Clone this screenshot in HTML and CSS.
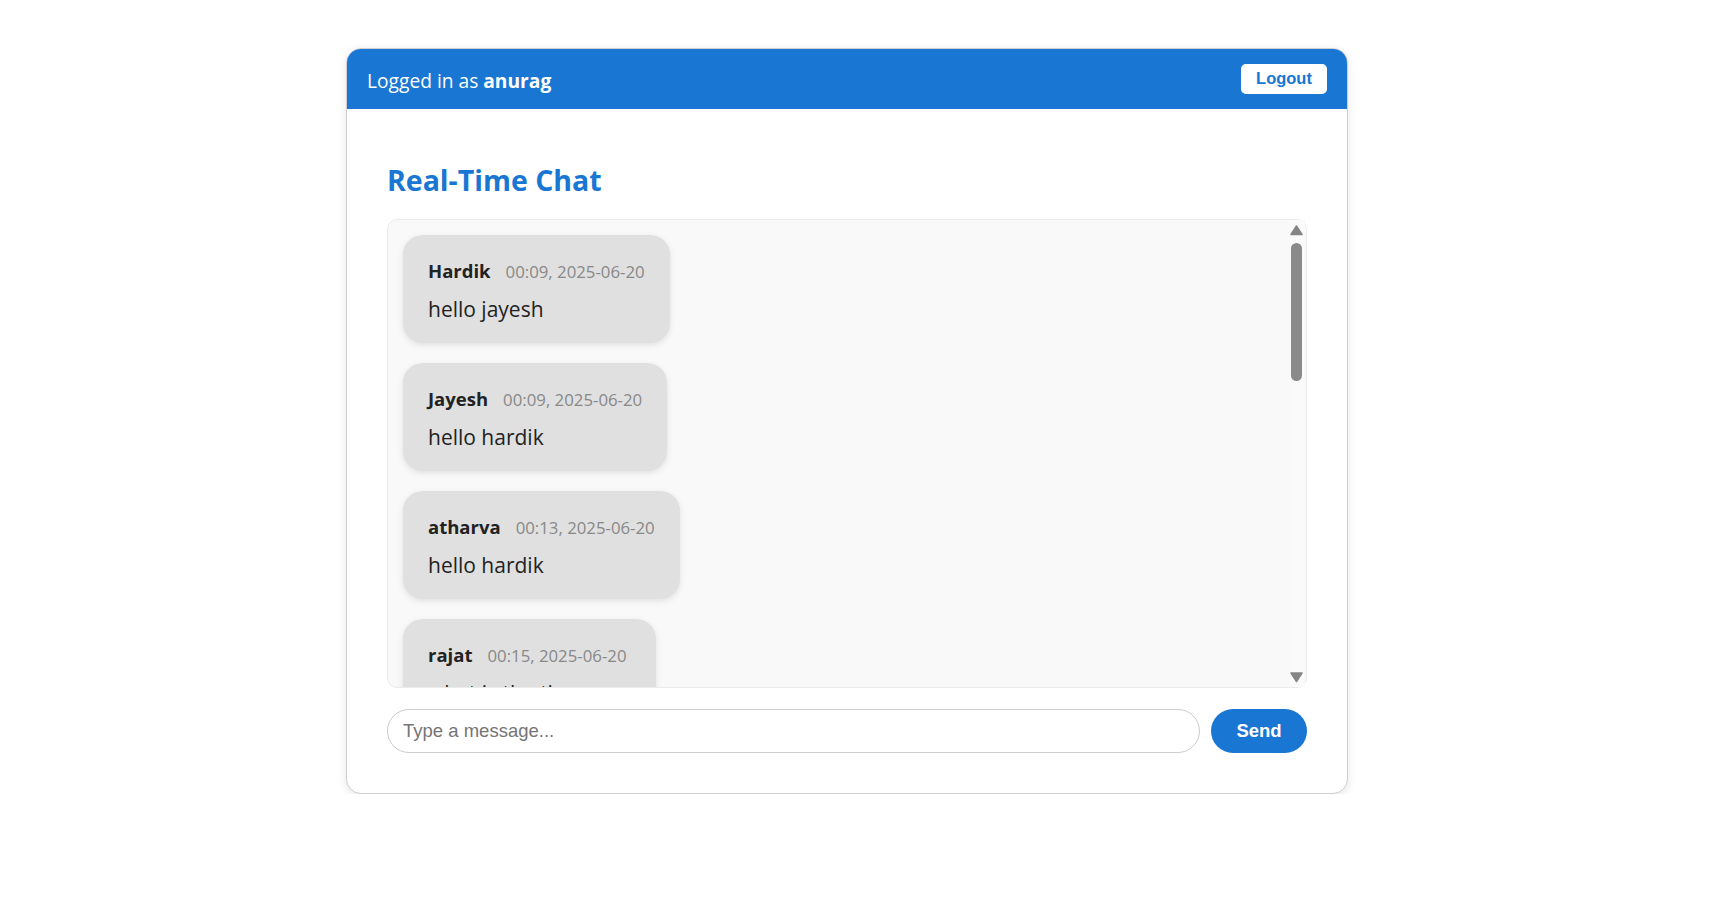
FILE: index.html
```html
<!DOCTYPE html>
<html lang="en">
<head>
<meta charset="utf-8">
<title>Real-Time Chat</title>
<link rel="stylesheet" href="styles.css">
</head>
<body>
<div class="card">
  <header class="topbar">
    <span class="who">Logged in as <b>anurag</b></span>
    <button class="logout" type="button">Logout</button>
  </header>
  <main class="content">
    <h2 class="title">Real-Time Chat</h2>
    <div class="chatbox">
      <div class="messages">
        <div class="bubble"><div class="meta"><span class="name">Hardik</span><span class="time">00:09, 2025-06-20</span></div><div class="text">hello jayesh</div></div>
        <div class="bubble"><div class="meta"><span class="name">Jayesh</span><span class="time">00:09, 2025-06-20</span></div><div class="text">hello hardik</div></div>
        <div class="bubble"><div class="meta"><span class="name">atharva</span><span class="time">00:13, 2025-06-20</span></div><div class="text">hello hardik</div></div>
        <div class="bubble"><div class="meta"><span class="name">rajat</span><span class="time">00:15, 2025-06-20</span></div><div class="text">what is the time now</div></div>
        <div class="bubble"><div class="meta"><span class="name">Hardik</span><span class="time">00:16, 2025-06-20</span></div><div class="text">it is 00:16</div></div>
        <div class="bubble"><div class="meta"><span class="name">rajat</span><span class="time">00:16, 2025-06-20</span></div><div class="text">thanks</div></div>
        <div class="bubble"><div class="meta"><span class="name">Jayesh</span><span class="time">00:18, 2025-06-20</span></div><div class="text">good night all</div></div>
        <div class="bubble"><div class="meta"><span class="name">atharva</span><span class="time">00:19, 2025-06-20</span></div><div class="text">good night</div></div>
        <div class="bubble"><div class="meta"><span class="name">anurag</span><span class="time">00:21, 2025-06-20</span></div><div class="text">hi everyone</div></div>
        <div class="bubble"><div class="meta"><span class="name">Hardik</span><span class="time">00:22, 2025-06-20</span></div><div class="text">hi anurag</div></div>
        <div class="bubble"><div class="meta"><span class="name">anurag</span><span class="time">00:23, 2025-06-20</span></div><div class="text">the chat works</div></div>
      </div>
      <div class="scrollbar" aria-hidden="true">
        <svg class="arrow" width="15" height="20" viewBox="0 0 15 20"><path d="M6.5 6 L12 14.5 L1 14.5 Z" fill="#858585" stroke="#858585" stroke-width="1.5" stroke-linejoin="round"/></svg>
        <div class="thumb"></div>
        <svg class="arrow down" width="15" height="20" viewBox="0 0 15 20"><path d="M1 6 L12 6 L6.5 14.5 Z" fill="#858585" stroke="#858585" stroke-width="1.5" stroke-linejoin="round"/></svg>
      </div>
    </div>
    <form class="composer">
      <input class="field" type="text" placeholder="Type a message...">
      <button class="send" type="button">Send</button>
    </form>
  </main>
</div>
</body>
</html>
```
FILE: styles.css
```css
html, body {
  margin: 0;
  padding: 0;
  background: #ffffff;
}

body {
  font-family: "Open Sans", "Noto Sans", sans-serif;
  color: #222;
}

.card {
  box-sizing: border-box;
  width: 1002px;
  margin: 48px 0 0 346px;
  border: 1px solid #cfcfcf;
  border-radius: 15px;
  overflow: hidden;
  background: #fff;
  box-shadow: 0 2px 10px rgba(0, 0, 0, 0.1);
}

.topbar {
  display: flex;
  align-items: center;
  justify-content: space-between;
  padding: 15px 20px;
  background: #1976d2;
  color: #fff;
}

.who {
  font-size: 19.2px;
  line-height: 26px;
  padding-top: 3px;
}

.who b {
  font-weight: 700;
}

.logout {
  width: 86px;
  height: 30px;
  padding: 0 0 2px;
  border: none;
  border-radius: 5px;
  background: #fff;
  color: #1976d2;
  font-family: "Liberation Sans", Arial, sans-serif;
  font-weight: 700;
  font-size: 16.5px;
  cursor: pointer;
}

.content {
  display: block;
  padding: 40px;
}

.title {
  margin: 11px 0 19px;
  font-size: 28.5px;
  line-height: 40px;
  font-weight: 700;
  color: #1976d2;
}

.chatbox {
  position: relative;
  height: 469px;
}

.messages {
  box-sizing: border-box;
  height: 100%;
  overflow: hidden;
  display: flex;
  flex-direction: column;
  align-items: flex-start;
  gap: 20.5px;
  padding: 15px 30px 15px 15px;
  background: #f9f9f9;
  border: 1px solid #ebebeb;
  border-radius: 10px;
}

.scrollbar {
  position: absolute;
  top: 1px;
  right: 2px;
  bottom: 1px;
  width: 15px;
  display: flex;
  flex-direction: column;
  background: #fafafa;
}

.arrow {
  display: block;
  flex: none;
}

.arrow.down {
  margin-top: auto;
}

.thumb {
  flex: none;
  width: 11px;
  height: 138px;
  margin: 3px 0 0 1px;
  border-radius: 6px;
  background: #8a8a8a;
}

.bubble {
  flex: none;
  padding: 22px 25px 18.5px;
  background: #e0e0e0;
  border-radius: 20px;
  box-shadow: 0 2px 6px rgba(0, 0, 0, 0.1);
}

.meta {
  display: flex;
  align-items: baseline;
  gap: 15px;
  line-height: 28px;
  white-space: nowrap;
}

.name {
  font-weight: 700;
  font-size: 18.5px;
  color: #222;
}

.time {
  font-size: 16.8px;
  color: #888;
}

.text {
  margin-top: 8px;
  font-size: 21px;
  line-height: 30px;
  color: #222;
  white-space: nowrap;
}

.composer {
  display: flex;
  gap: 11px;
  margin: 21px 0 0;
}

.field {
  flex: 1;
  box-sizing: border-box;
  height: 44px;
  padding: 0 15px;
  border: 1px solid #ccc;
  border-radius: 22px;
  font-family: "Liberation Sans", Arial, sans-serif;
  font-size: 18.5px;
  color: #222;
  background: #fff;
  outline: none;
}

.field::placeholder {
  color: #757575;
}

.send {
  flex: none;
  width: 96px;
  height: 44px;
  border: none;
  border-radius: 22px;
  background: #1976d2;
  color: #fff;
  font-family: "Liberation Sans", Arial, sans-serif;
  font-weight: 700;
  font-size: 18.5px;
  cursor: pointer;
}
```
